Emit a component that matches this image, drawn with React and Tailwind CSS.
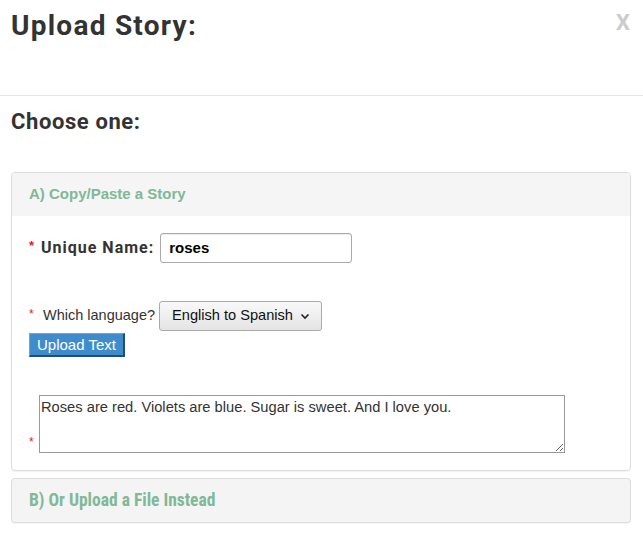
// App.jsx — "Upload Story" modal, static recreation.

const roboto = { fontFamily: 'Roboto, "Liberation Sans", Arial, sans-serif' };
const robotoCond = { fontFamily: 'Roboto, "Liberation Sans", Arial, sans-serif', fontStretch: '75%' };

export default function App() {
  return (
    <div className="w-[643px] h-[559px] bg-white text-[#333] font-['Liberation_Sans',Arial,sans-serif]">
      {/* Modal header */}
      <div className="relative h-[96px] border-b border-[#e5e5e5] px-[11px] pt-[6px]">
        <h1 className="text-[28px] font-bold tracking-[1.25px] leading-[40px]" style={roboto}>
          Upload Story:
        </h1>
        <span className="absolute right-[13px] top-[6px] text-[22px] font-bold text-[#cccccc]" style={roboto}>
          X
        </span>
      </div>

      <h2 className="px-[11px] pt-[11px] text-[22px] font-bold tracking-[0.6px] leading-[30px]" style={roboto}>
        Choose one:
      </h2>

      {/* Option A */}
      <div className="mt-[35px] mx-[11px] w-[620px] border border-[#dddddd] rounded-[4px] shadow-[0_1px_1px_rgba(0,0,0,0.05)] overflow-hidden">
        <div className="h-[43px] bg-[#f5f5f5] flex items-center px-[17px]">
          <span className="text-[15px] font-bold text-[#80b898]">A) Copy/Paste a Story</span>
        </div>

        <div className="px-[17px] pt-[17px] pb-[17px]">
          <div className="flex items-center">
            <span className="text-[#e02020] text-[13px] font-bold w-[12px] -mt-[4px]">*</span>
            <span className="text-[16px] font-bold tracking-[1px] mr-[6px]" style={roboto}>Unique Name:</span>
            <div className="w-[192px] h-[30px] border border-[#aaaaaa] rounded-[3px] px-[8px] flex items-center text-[15px] font-bold text-black shadow-[inset_0_1px_1px_rgba(0,0,0,0.08)]">
              roses
            </div>
          </div>

          <div className="flex items-center mt-[38px]">
            <span className="text-[#e02020] text-[12px] w-[14px] -mt-[4px]">*</span>
            <span className="text-[14.5px] mr-[4px]">Which language?</span>
            <div className="h-[30px] pl-[12px] pr-[11px] border border-[#aaaaaa] rounded-[3px] bg-gradient-to-b from-[#f9f9f9] to-[#e4e4e4] flex items-center gap-[7px] text-[14.6px] text-[#111]">
              English to Spanish
              <svg width="10" height="7" viewBox="0 0 10 7" fill="none" stroke="#222" strokeWidth="1.6">
                <path d="M1.5 1.5 L5 5 L8.5 1.5" />
              </svg>
            </div>
          </div>

          <button className="mt-[2px] h-[24px] w-[96px] bg-[#3f8ccc] text-white text-[15px] border-b-2 border-r-2 border-[#1f4e79] border-t border-l border-t-[#6aa7dc] border-l-[#6aa7dc] leading-none">
            Upload Text
          </button>

          <div className="flex items-end mt-[38px]">
            <span className="text-[#e02020] text-[12px] mb-[2px] w-[10px]">*</span>
            <textarea
              readOnly
              defaultValue="Roses are red. Violets are blue. Sugar is sweet. And I love you."
              className="w-[526px] h-[58px] border border-[#999999] px-[1px] py-[2px] text-[14.7px] leading-[18px] text-[#333] outline-none"
            />
          </div>
        </div>
      </div>

      {/* Option B */}
      <div className="mt-[7px] mx-[11px] w-[620px] h-[45px] border border-[#dddddd] rounded-[4px] bg-[#f4f4f4] shadow-[0_1px_1px_rgba(0,0,0,0.05)] flex items-center px-[17px]">
        <span className="text-[17.5px] font-bold text-[#80b898]" style={robotoCond}>B) Or Upload a File Instead</span>
      </div>
    </div>
  );
}
